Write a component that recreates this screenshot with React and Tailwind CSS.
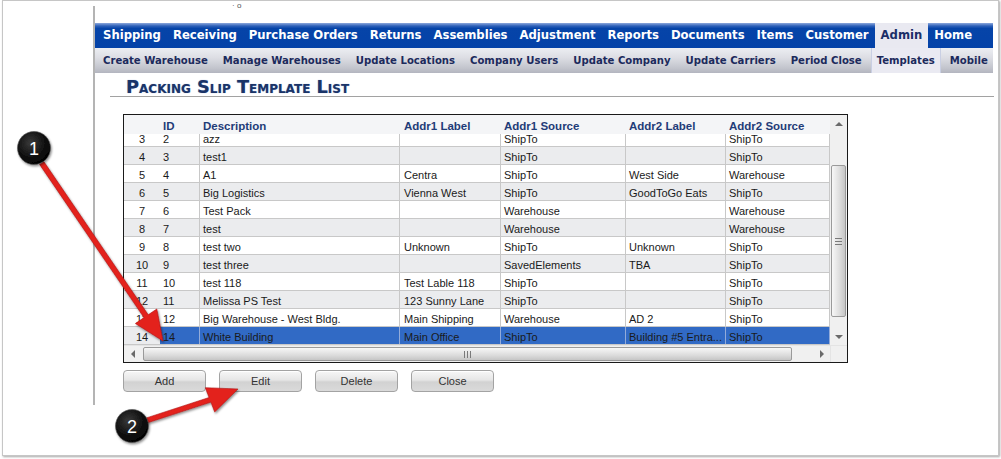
const menu = ["Shipping", "Receiving", "Purchase Orders", "Returns", "Assemblies", "Adjustment", "Reports", "Documents", "Items", "Customer", "Admin", "Home"];
const submenu = ["Create Warehouse", "Manage Warehouses", "Update Locations", "Company Users", "Update Company", "Update Carriers", "Period Close", "Templates", "Mobile"];

const rows = [
  [3, 2, "azz", "", "ShipTo", "", "ShipTo"],
  [4, 3, "test1", "", "ShipTo", "", "ShipTo"],
  [5, 4, "A1", "Centra", "ShipTo", "West Side", "Warehouse"],
  [6, 5, "Big Logistics", "Vienna West", "ShipTo", "GoodToGo Eats", "ShipTo"],
  [7, 6, "Test Pack", "", "Warehouse", "", "Warehouse"],
  [8, 7, "test", "", "Warehouse", "", "Warehouse"],
  [9, 8, "test two", "Unknown", "ShipTo", "Unknown", "ShipTo"],
  [10, 9, "test three", "", "SavedElements", "TBA", "ShipTo"],
  [11, 10, "test 118", "Test Lable 118", "ShipTo", "", "ShipTo"],
  [12, 11, "Melissa PS Test", "123 Sunny Lane", "ShipTo", "", "ShipTo"],
  [13, 12, "Big Warehouse - West Bldg.", "Main Shipping", "Warehouse", "AD 2", "ShipTo"],
  [14, 14, "White Building", "Main Office", "ShipTo", "Building #5 Entra...", "ShipTo"],
];

// column widths, left grid lines at 199 / 399 / 500 / 625 / 725
const cols = [
  "w-[36px] justify-center",
  "w-[39px] pl-[3px]",
  "w-[200px] pl-[3px] border-l",
  "w-[101px] pl-[4px] border-l",
  "w-[125px] pl-[3px] border-l",
  "w-[100px] pl-[3px] border-l",
  "w-[105px] pl-[3px] border-l border-r",
];
const headers = ["", "ID", "Description", "Addr1 Label", "Addr1 Source", "Addr2 Label", "Addr2 Source"];

const Thumb = ({ vertical }) =>
  vertical ? (
    <div className="mx-auto mt-[33px] flex h-[152px] w-[15px] flex-col items-center justify-center gap-[2px] rounded-[2px] border border-[#9a9a9a] bg-[linear-gradient(to_right,#f7f7f7,#dcdcdc_60%,#c6c6c6)]">
      <div className="h-px w-[7px] bg-[#7a7a7a]" />
      <div className="h-px w-[7px] bg-[#7a7a7a]" />
      <div className="h-px w-[7px] bg-[#7a7a7a]" />
    </div>
  ) : (
    <div className="ml-[2px] flex h-[14px] w-[649px] items-center justify-center gap-[2px] rounded-[2px] border border-[#9a9a9a] bg-[linear-gradient(to_bottom,#f7f7f7,#dcdcdc_60%,#c6c6c6)]">
      <div className="h-[7px] w-px bg-[#7a7a7a]" />
      <div className="h-[7px] w-px bg-[#7a7a7a]" />
      <div className="h-[7px] w-px bg-[#7a7a7a]" />
    </div>
  );

const Button = ({ label }) => (
  <button className="h-[22px] w-[83px] rounded-[4px] border border-[#a3a3a3] bg-[linear-gradient(to_bottom,#f7f7f7_0%,#e6e6e6_45%,#d2d2d2_55%,#dadada_100%)] text-[11px] text-[#333] shadow-[inset_0_1px_0_#fff]">
    {label}
  </button>
);

export default function App() {
  return (
    <div className="relative h-[459px] w-[1001px] overflow-hidden bg-white font-['Liberation_Sans',Arial,sans-serif]">
      {/* screenshot frame */}
      <div className="ml-[2px] h-[456px] w-[997px] border border-[#c6c6c6] bg-white shadow-[1px_1px_2px_rgba(0,0,0,0.35)]">
        <div className="ml-[90px] mt-[5px] h-[399px] w-[901px] border-l-2 border-[#b4b4b4]">
          <div className="h-[17px] pl-[137px] text-[8px] leading-[8px] text-[#555] -translate-y-[4px]">· o</div>

          {/* main menu */}
          <nav className="flex h-[25px] w-[898px] items-stretch whitespace-nowrap bg-[linear-gradient(to_bottom,#8da8dc_0%,#2d60b8_12%,#0644a8_22%,#0442a8_100%)] pl-[2px] font-['DejaVu_Sans',sans-serif] text-[11.65px] font-bold">
            {menu.map((m) =>
              m === "Admin" ? (
                <span key={m} className="flex items-center bg-[#e9e9f1] px-[6px] text-[#1b2f68]">{m}</span>
              ) : (
                <span key={m} className="flex items-center px-[6px] text-white">{m}</span>
              )
            )}
          </nav>

          {/* sub menu */}
          <div className="flex h-[25px] w-[898px] items-stretch gap-[3px] whitespace-nowrap bg-[linear-gradient(to_bottom,#eceef2_0%,#dcdde3_40%,#c3c5cd_80%,#b3b5bf_100%)] pl-[2px] font-['DejaVu_Sans',sans-serif] text-[10.1px] font-bold text-[#1c2a5c]">
            {submenu.map((s) =>
              s === "Templates" ? (
                <span key={s} className="flex items-center border-x border-[#c9cfe3] bg-[#eaeaf2] px-[5px]">{s}</span>
              ) : (
                <span key={s} className="flex items-center px-[6px]">{s}</span>
              )
            )}
          </div>

          {/* title */}
          <div className="h-[23px] pl-[31px] pt-[5px] font-['DejaVu_Sans',sans-serif] text-[17.8px] font-bold leading-[17px] text-[#1a3468] [font-variant:small-caps] [text-shadow:0_0_1px_#8aa2d0]">
            Packing Slip Template List
          </div>
          <div className="ml-[15px] h-px w-[884px] bg-[#a2a2a2]" />

          {/* grid */}
          <div className="ml-[28px] mt-[17px] flex h-[249px] w-[725px] flex-col border border-[#1a1a1a] text-[11px] text-[#1a1a1a]">
            <div className="flex h-[230px]">
              <div className="flex w-[706px] flex-col">
                <div className="flex h-[19px] bg-[#f4f5f7] text-[11.5px] font-bold text-[#1f3c78]">
                  {headers.map((h, i) => (
                    <div key={i} className={`flex items-center border-transparent pt-[4px] ${cols[i]}`}>{h}</div>
                  ))}
                </div>
                <div className="flex h-[211px] flex-col justify-end overflow-hidden">
                  {rows.map((r, ri) => {
                    const selected = ri === rows.length - 1;
                    const stripe = ri % 2 === 1 ? "bg-[#ebecee]" : "bg-white";
                    return (
                      <div key={r[0]} className={`flex h-[18px] shrink-0 border-b border-[#c8c8c8] ${stripe}`}>
                        {r.map((c, ci) => (
                          <div
                            key={ci}
                            className={`flex items-center overflow-hidden whitespace-nowrap pt-[4px] ${cols[ci]} ${
                              selected && ci > 0 ? "border-[#93abd9] bg-[#316ac5]" : "border-[#c8c8c8]"
                            }`}
                          >
                            {c}
                          </div>
                        ))}
                      </div>
                    );
                  })}
                </div>
              </div>

              {/* vertical scrollbar */}
              <div className="flex w-[17px] flex-col bg-[#f0f0f0]">
                <div className="flex h-[17px] items-center justify-center">
                  <div className="h-0 w-0 border-x-[4px] border-b-[4px] border-x-transparent border-b-[#6a6a6a]" />
                </div>
                <div className="h-[196px]">
                  <Thumb vertical />
                </div>
                <div className="flex h-[17px] items-center justify-center">
                  <div className="h-0 w-0 border-x-[4px] border-t-[4px] border-x-transparent border-t-[#6a6a6a]" />
                </div>
              </div>
            </div>

            {/* horizontal scrollbar */}
            <div className="flex h-[17px] bg-[#f0f0f0]">
              <div className="flex w-[706px] items-center border-t border-[#e4e4e4]">
                <div className="flex h-full w-[17px] items-center justify-center">
                  <div className="h-0 w-0 border-y-[4px] border-r-[4px] border-y-transparent border-r-[#6a6a6a]" />
                </div>
                <div className="flex flex-1 items-center">
                  <Thumb />
                </div>
                <div className="flex h-full w-[17px] items-center justify-center">
                  <div className="h-0 w-0 border-y-[4px] border-l-[4px] border-y-transparent border-l-[#6a6a6a]" />
                </div>
              </div>
              <div className="w-[17px] border-l border-t border-[#e4e4e4]" />
            </div>
          </div>

          {/* buttons */}
          <div className="ml-[28px] mt-[7px] flex gap-[13px]">
            <Button label="Add" />
            <Button label="Edit" />
            <Button label="Delete" />
            <Button label="Close" />
          </div>
        </div>
      </div>

      {/* callouts */}
      <svg className="pointer-events-none absolute left-0 top-0" width="1001" height="459" viewBox="0 0 1001 459">
        <defs>
          <filter id="sh" x="-20%" y="-20%" width="140%" height="140%">
            <feDropShadow dx="1" dy="1.5" stdDeviation="1.2" floodColor="#000" floodOpacity="0.45" />
          </filter>
          <radialGradient id="ball" cx="40%" cy="35%" r="70%">
            <stop offset="0%" stopColor="#3a3a3a" />
            <stop offset="60%" stopColor="#111" />
            <stop offset="100%" stopColor="#000" />
          </radialGradient>
        </defs>
        <g filter="url(#sh)" fill="#e3211e" stroke="#b01412" strokeWidth="0.6">
          <polygon points="39.6,164.4 144,317.6 135.4,323.5 163,341 156.8,309 148.2,314.8 43.8,161.6" />
          <polygon points="145.9,423.3 210.9,402.1 214.7,411.9 238,389 205.3,387.7 209.1,397.5 144.1,418.7" />
        </g>
        <g filter="url(#sh)">
          <circle cx="34" cy="148" r="16.5" fill="url(#ball)" stroke="#555" strokeWidth="0.6" />
          <circle cx="132" cy="426" r="16.5" fill="url(#ball)" stroke="#555" strokeWidth="0.6" />
        </g>
        <text x="34" y="154.5" textAnchor="middle" fill="#fff" fontFamily="Liberation Sans, Arial, sans-serif" fontSize="18">1</text>
        <text x="132" y="432.5" textAnchor="middle" fill="#fff" fontFamily="Liberation Sans, Arial, sans-serif" fontSize="18">2</text>
      </svg>
    </div>
  );
}
